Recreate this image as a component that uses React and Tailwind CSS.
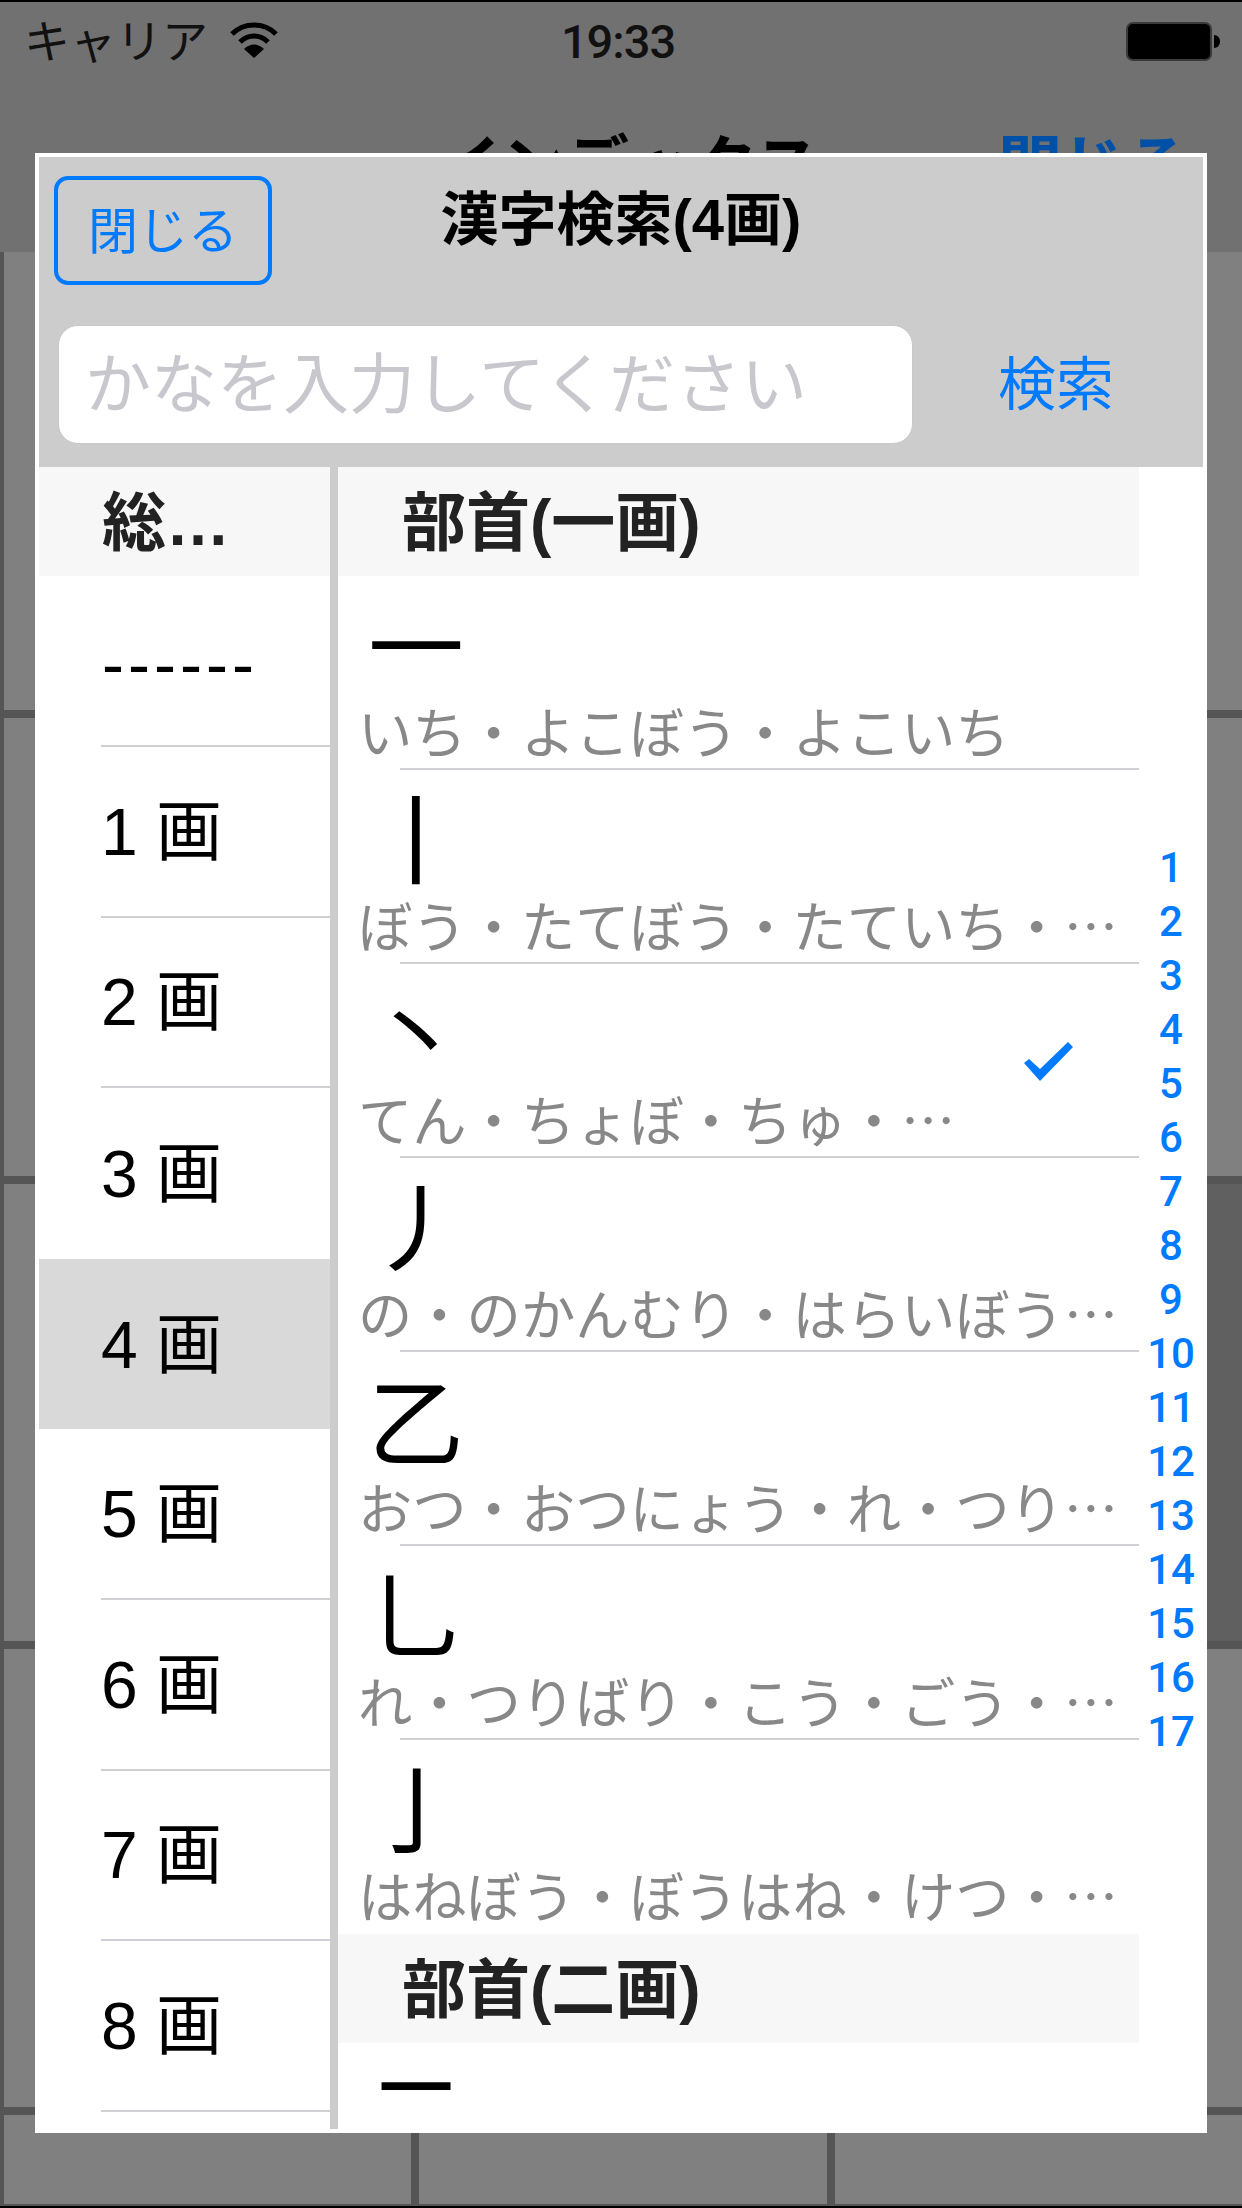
import React from 'react';

const strokes = ['1 画', '2 画', '3 画', '4 画', '5 画', '6 画', '7 画', '8 画'];

const firstGroup = [
  { kanji: '一', reading: 'いち・よこぼう・よこいち' },
  { kanji: '丨', reading: 'ぼう・たてぼう・たていち・…' },
  { kanji: '丶', reading: 'てん・ちょぼ・ちゅ・…', checked: true },
  { kanji: '丿', reading: 'の・のかんむり・はらいぼう…' },
  { kanji: '乙', reading: 'おつ・おつにょう・れ・つり…' },
  { kanji: '乚', reading: 'れ・つりばり・こう・ごう・…' },
  { kanji: '亅', reading: 'はねぼう・ぼうはね・けつ・…', last: true },
];

const indexNumbers = Array.from({ length: 17 }, (_, i) => i + 1);

function Background() {
  const rows = [0, 1, 2, 3, 4];
  const cols = [0, 1, 2];
  return (
    <div className="flex-1 grid grid-cols-[407px_408px_408px] grid-rows-[458px_458px_457px_458px_89px] gap-[8px] pl-[4px] bg-[#555555]">
      {rows.map((r) =>
        cols.map((c) => (
          <div
            key={`${r}-${c}`}
            className={r === 2 && c === 2 ? 'bg-[#606060]' : 'bg-[#808080]'}
          />
        ))
      )}
    </div>
  );
}

function StatusBar() {
  return (
    <div className="h-[250px] bg-[#717171] relative overflow-hidden">
      <div className="flex items-start justify-between pl-[24px] pr-[22px] pt-[17px]">
        <div className="flex items-start w-[400px]">
          <span className="text-[46px] leading-[46px] text-[#111111]">キャリア</span>
          <svg className="ml-[22px] mt-[3px]" width="48" height="36" viewBox="0 0 48 36">
            <path d="M2 12 C14 0 34 0 46 12" fill="none" stroke="#000" strokeWidth="5" />
            <path d="M10 20 C18 12 30 12 38 20" fill="none" stroke="#000" strokeWidth="5" />
            <path d="M14 27 C20 21 28 21 34 27 L24 36 Z" fill="#000" />
          </svg>
        </div>
        <span className="font-['Roboto',sans-serif] text-[47px] leading-[46px] font-medium tracking-[-1px] text-[#111111] mr-[8px]">19:33</span>
        <div className="flex items-center w-[400px] justify-end mt-[3px]">
          <div className="w-[86px] h-[39px] bg-black border-[2px] border-[#3a3a3a] rounded-[7px]" />
          <div className="w-[6px] h-[13px] bg-black rounded-r-full ml-[2px]" />
        </div>
      </div>
      <div className="flex items-center justify-between pt-[66px] pl-[437px] pr-[52px]">
        <span className="text-[64px] leading-[70px] font-bold text-black">インデックス</span>
        <span className="text-[64px] leading-[70px] font-bold text-[#0050a8]">閉じる</span>
      </div>
    </div>
  );
}

function KanjiRow({ kanji, reading, checked, last }) {
  return (
    <div className="h-[194px] relative">
      <div className={`h-full ml-[62px] ${last ? '' : 'border-b-[2px] border-[#d0d0d4]'}`}>
        <div className="-ml-[42px] flex items-center justify-between h-full pr-[65px]">
          <div className="flex flex-col self-start pt-[19px]">
            <div className="h-[108px] pl-[10px] text-[96px] leading-[108px] text-black">{kanji}</div>
            <div className="font-['Noto_Sans_CJK_JP',sans-serif] text-[54.3px] leading-[54px] whitespace-nowrap text-[#888888]">{reading}</div>
          </div>
          {checked && (
            <svg width="50" height="40" viewBox="0 0 50 40" className="shrink-0 mt-[3px]">
              <polygon points="0,21 5,17 16,27 44,0 49,5 16,39" fill="#007aff" />
            </svg>
          )}
        </div>
      </div>
    </div>
  );
}

function SectionHeader({ children, className }) {
  return (
    <div className={`bg-[#f7f7f7] flex items-center pt-[3px] font-bold text-[#222222] text-[64px] ${className}`}>
      {children}
    </div>
  );
}

function Modal() {
  return (
    <div className="absolute left-[35px] top-[153px] w-[1172px] h-[1980px] bg-white p-[4px] flex flex-col">
      <div className="h-[310px] bg-[#cccccc] pt-[19px] shrink-0">
        <div className="grid grid-cols-[1fr_auto_1fr] items-start px-[15px]">
          <button className="w-[218px] h-[109px] border-[4px] border-[#007aff] rounded-[14px] pt-[4px] text-[50px] text-[#007aff] justify-self-start">
            閉じる
          </button>
          <div className="text-[58px] leading-[70px] mt-[9px] font-bold text-black whitespace-nowrap">漢字検索(4画)</div>
          <div />
        </div>
        <div className="flex items-center mt-[40px] pl-[19px]">
          <input
            className="w-[855px] h-[119px] bg-white border border-[#c8c7cc] rounded-[20px] pl-[26px] text-[66px] placeholder:text-[#c7c7cd] outline-none"
            placeholder="かなを入力してください"
            readOnly
          />
          <div className="ml-[85px] text-[58px] leading-[70px] text-[#007aff]">検索</div>
        </div>
      </div>

      <div className="flex-1 flex min-h-0">
        <div className="w-[291px] shrink-0 overflow-hidden">
          <SectionHeader className="h-[109px] pl-[63px]">総…</SectionHeader>
          <div className="h-[171px] ml-[62px] border-b-[2px] border-[#d0d0d4] flex items-center pl-[1px] pt-[8px] text-[66px] tracking-[4px] text-black">
            ------
          </div>
          {strokes.map((s) => (
            <div key={s} className={`h-[170.6px] ${s === '4 画' ? 'bg-[#d9d9d9]' : ''}`}>
              <div
                className={`h-full ml-[62px] flex items-center pt-[2px] text-[66px] text-black ${
                  s === '3 画' || s === '4 画' ? '' : 'border-b-[2px] border-[#d0d0d4]'
                }`}
              >
                {s}
              </div>
            </div>
          ))}
        </div>
        <div className="w-[8px] shrink-0 bg-[#cccccc]" />
        <div className="w-[801px] shrink-0 overflow-hidden">
          <SectionHeader className="h-[109px] pl-[64px]">部首(一画)</SectionHeader>
          {firstGroup.map((row) => (
            <KanjiRow key={row.kanji} {...row} />
          ))}
          <SectionHeader className="h-[109px] pl-[64px]">部首(二画)</SectionHeader>
          <div className="pl-[30px] pt-[7px] text-[96px] leading-[132px] text-black">二</div>
        </div>
        <div className="flex-1 flex flex-col items-center justify-center pt-[3px]">
          {indexNumbers.map((n) => (
            <div key={n} className="h-[54px] flex items-center font-['Roboto',sans-serif] text-[42px] font-medium text-[#007aff]">
              {n}
            </div>
          ))}
        </div>
      </div>
    </div>
  );
}

export default function App() {
  return (
    <div className="relative w-[1242px] h-[2208px] overflow-hidden bg-black py-[2px] font-['Liberation_Sans','Noto_Sans_CJK_JP',sans-serif]">
      <div className="h-full flex flex-col">
        <StatusBar />
        <Background />
      </div>
      <Modal />
    </div>
  );
}
